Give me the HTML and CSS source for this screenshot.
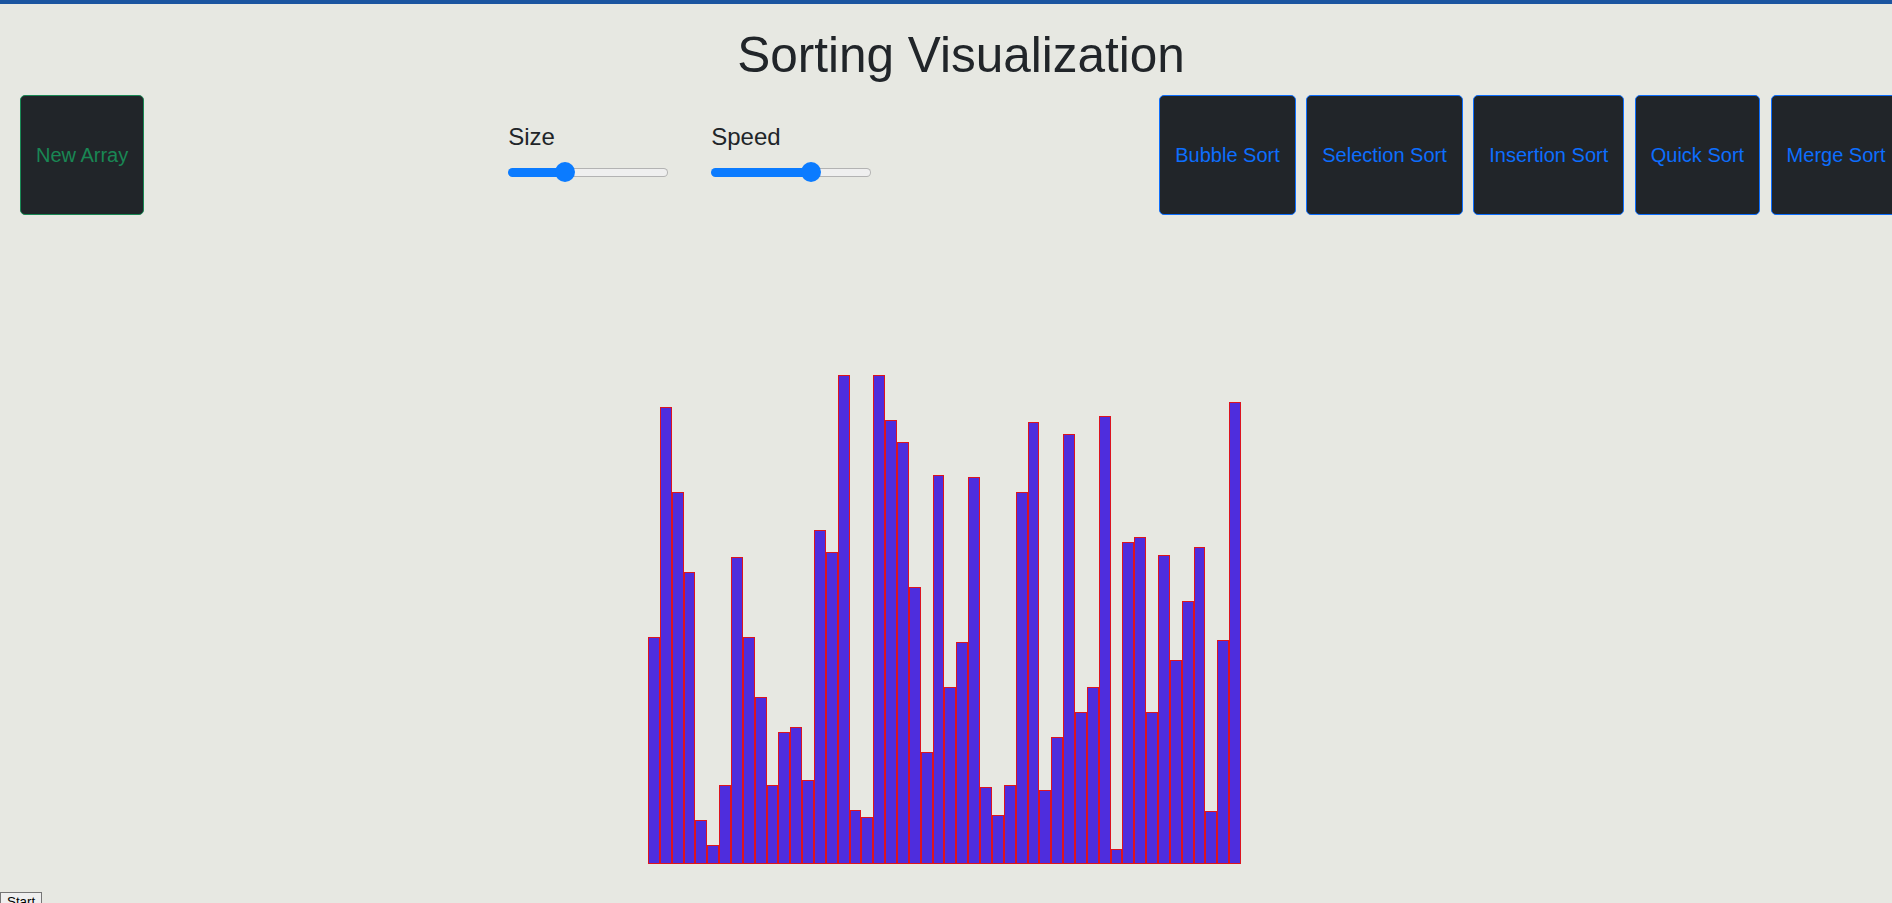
FILE: index.html
```html
<!DOCTYPE html>
<html lang="en">
<head>
<meta charset="utf-8">
<title>Sorting Visualization</title>
<link rel="stylesheet" href="styles.css">
</head>
<body>
<div class="topbar"></div>
<h1 class="title">Sorting Visualization</h1>
<div class="controls">
  <button class="btn btn-green">New Array</button>
  <div class="sliders">
    <div class="slider-group">
      <label class="slider-label">Size</label>
      <input type="range" class="range range-size" min="0" max="100" value="33">
    </div>
    <div class="slider-group">
      <label class="slider-label">Speed</label>
      <input type="range" class="range range-speed" min="0" max="100" value="64">
    </div>
  </div>
  <div class="sorts">
    <button class="btn btn-blue">Bubble Sort</button>
    <button class="btn btn-blue">Selection Sort</button>
    <button class="btn btn-blue">Insertion Sort</button>
    <button class="btn btn-blue">Quick Sort</button>
    <button class="btn btn-blue">Merge Sort</button>
  </div>
</div>
<div class="chart-wrap">
  <div class="chart">
    <div class="bar" style="height:227px"></div>
    <div class="bar" style="height:457px"></div>
    <div class="bar" style="height:372px"></div>
    <div class="bar" style="height:292px"></div>
    <div class="bar" style="height:44px"></div>
    <div class="bar" style="height:19px"></div>
    <div class="bar" style="height:79px"></div>
    <div class="bar" style="height:307px"></div>
    <div class="bar" style="height:227px"></div>
    <div class="bar" style="height:167px"></div>
    <div class="bar" style="height:79px"></div>
    <div class="bar" style="height:132px"></div>
    <div class="bar" style="height:137px"></div>
    <div class="bar" style="height:84px"></div>
    <div class="bar" style="height:334px"></div>
    <div class="bar" style="height:312px"></div>
    <div class="bar" style="height:489px"></div>
    <div class="bar" style="height:54px"></div>
    <div class="bar" style="height:47px"></div>
    <div class="bar" style="height:489px"></div>
    <div class="bar" style="height:444px"></div>
    <div class="bar" style="height:422px"></div>
    <div class="bar" style="height:277px"></div>
    <div class="bar" style="height:112px"></div>
    <div class="bar" style="height:389px"></div>
    <div class="bar" style="height:177px"></div>
    <div class="bar" style="height:222px"></div>
    <div class="bar" style="height:387px"></div>
    <div class="bar" style="height:77px"></div>
    <div class="bar" style="height:49px"></div>
    <div class="bar" style="height:79px"></div>
    <div class="bar" style="height:372px"></div>
    <div class="bar" style="height:442px"></div>
    <div class="bar" style="height:74px"></div>
    <div class="bar" style="height:127px"></div>
    <div class="bar" style="height:430px"></div>
    <div class="bar" style="height:152px"></div>
    <div class="bar" style="height:177px"></div>
    <div class="bar" style="height:448px"></div>
    <div class="bar" style="height:15px"></div>
    <div class="bar" style="height:322px"></div>
    <div class="bar" style="height:327px"></div>
    <div class="bar" style="height:152px"></div>
    <div class="bar" style="height:309px"></div>
    <div class="bar" style="height:204px"></div>
    <div class="bar" style="height:263px"></div>
    <div class="bar" style="height:317px"></div>
    <div class="bar" style="height:53px"></div>
    <div class="bar" style="height:224px"></div>
    <div class="bar" style="height:462px"></div>
  </div>
</div>
<button class="start">Start</button>
</body>
</html>
```
FILE: styles.css
```css
html, body {
  overflow: hidden;
}
body {
  margin: 0;
  background: #e7e8e2;
  font-family: "Liberation Sans", Arial, sans-serif;
  color: #212529;
}
.topbar {
  height: 4px;
  background: #1b55a0;
}
.title {
  margin: 21px 0 0;
  padding-left: 30px;
  font-size: 49.5px;
  font-weight: 400;
  line-height: 1.2;
  text-align: center;
  color: #212529;
}
.controls {
  display: flex;
  align-items: flex-start;
  padding-left: 20px;
  margin-top: 11px;
  height: 120px;
}
.btn {
  flex-shrink: 0;
  height: 120px;
  padding: 0 15px;
  background: #212529;
  border: 1px solid;
  border-radius: 5px;
  font-family: "Liberation Sans", Arial, sans-serif;
  font-size: 20px;
  display: flex;
  align-items: center;
  justify-content: center;
  white-space: nowrap;
}
.btn-green {
  color: #198754;
  border-color: #198754;
}
.btn-blue {
  color: #0d6efd;
  border-color: #0d6efd;
}
.sliders {
  flex-shrink: 0;
  display: flex;
  gap: 43px;
  margin-left: 364px;
  margin-top: 28px;
}
.slider-group {
  display: flex;
  flex-direction: column;
  gap: 10px;
  width: 160px;
}
.slider-label {
  font-size: 24px;
  line-height: 1.2;
}
.range {
  -webkit-appearance: none;
  appearance: none;
  margin: 0;
  width: 160px;
  height: 20px;
  background: transparent;
}
.range::-webkit-slider-runnable-track {
  height: 9px;
  border: 1px solid transparent;
  border-radius: 5px;
}
.range-size::-webkit-slider-runnable-track {
  background:
    linear-gradient(to right, #0b7bff 35%, #efefef 35%) padding-box,
    linear-gradient(to right, #0b7bff 35%, #b3b3b3 35%) border-box;
}
.range-speed::-webkit-slider-runnable-track {
  background:
    linear-gradient(to right, #0b7bff 63%, #efefef 63%) padding-box,
    linear-gradient(to right, #0b7bff 63%, #b3b3b3 63%) border-box;
}
.range::-webkit-slider-thumb {
  -webkit-appearance: none;
  appearance: none;
  width: 20px;
  height: 20px;
  border-radius: 50%;
  background: #0b7bff;
  border: none;
  margin-top: -6.5px;
}
.sorts {
  flex-shrink: 0;
  display: flex;
  gap: 10.5px;
  margin-left: 288px;
}
.chart-wrap {
  display: flex;
  justify-content: center;
  padding-right: 3px;
}
.chart {
  width: 593px;
  height: 649px;
  display: flex;
  align-items: flex-end;
}
.bar {
  flex: 1 1 0;
  box-sizing: border-box;
  background: #4e2ddd;
  border: 1px solid #dc1420;
}
.start {
  display: block;
  margin-top: 28px;
  padding: 1px 6px;
  font-family: "Liberation Sans", Arial, sans-serif;
  font-size: 13.33px;
  background: #efefef;
  color: #000;
  border: 1px solid #767676;
  border-radius: 0;
}
```
